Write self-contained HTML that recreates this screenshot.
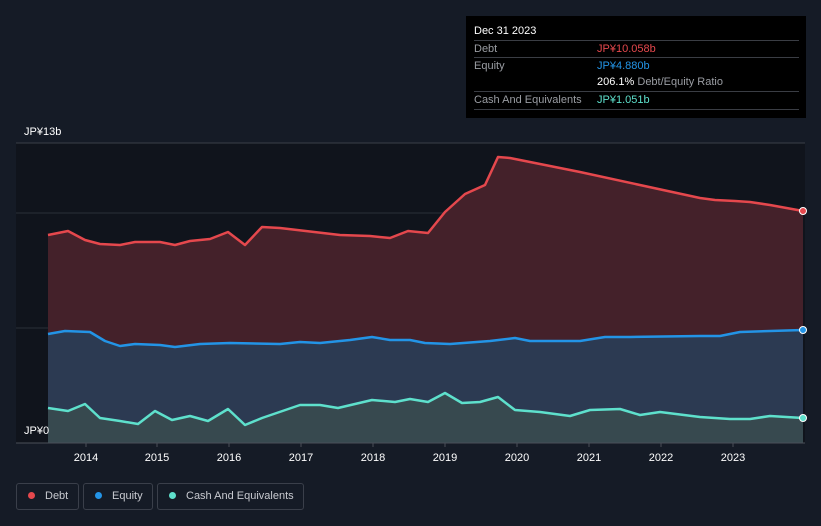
<!DOCTYPE html>
<html><head><meta charset="utf-8"><style>
html,body{margin:0;width:821px;height:526px;overflow:hidden}
body{background:#151b26;font-family:"Liberation Sans",sans-serif;position:relative}
.t{position:absolute;font-size:11px;color:#fff}
.tip{position:absolute;left:466px;top:16px;width:340px;height:102px;background:#000;font-size:11px}
.row{position:absolute;left:8px;width:325px;border-top:1px solid #3a3d44;height:17px;line-height:17px;color:#9a9da3}
.leg{position:absolute;top:483px;height:27px;border:1px solid #3a3f4a;border-radius:3px;color:#c8cad0;font-size:11px;line-height:25px;box-sizing:border-box;white-space:nowrap}
.leg i{display:inline-block;width:7px;height:7px;border-radius:50%;margin:0 10px 0 11px;vertical-align:0}
</style></head><body>
<svg width="821" height="526" style="position:absolute;left:0;top:0">
<rect x="16" y="143" width="789" height="300" fill="#10141c"/>
<line x1="16" y1="143" x2="805" y2="143" stroke="#3a3f48"/>
<line x1="16" y1="213" x2="805" y2="213" stroke="#2a2f38"/>
<line x1="16" y1="328" x2="805" y2="328" stroke="#2a2f38"/>
<polygon fill="#44212a" points="48,443 48,235 68,231 85,240 100,244 120,245 135,242 160,242 175,245 190,241 210,239 228,232 245,245 262,227 280,228 340,235 370,236 390,238 408,231 428,233 445,212 465,194 485,185 498,157 510,158 580,172 700,198 715,200 735,201 750,202 770,205 803,211 803,443"/>
<polygon fill="#2c3a52" points="48,443 48,334 65,331 90,332 105,341 120,346 135,344 160,345 175,347 200,344 230,343 280,344 300,342 320,343 350,340 372,337 390,340 410,340 425,343 450,344 490,341 515,338 530,341 580,341 605,337 630,337 700,336 720,336 740,332 803,330 803,443"/>
<polygon fill="#37494f" points="48,443 48,408 68,411 85,404 100,418 120,421 138,424 155,411 172,420 190,416 208,421 228,409 245,425 262,418 300,405 320,405 338,408 372,400 395,402 410,399 428,402 445,393 462,403 480,402 498,397 515,410 540,412 570,416 590,410 620,409 640,415 660,412 700,417 730,419 750,419 770,416 803,418 803,443"/>
<polyline fill="none" stroke="#e5484d" stroke-width="2.5" stroke-linejoin="round" points="48,235 68,231 85,240 100,244 120,245 135,242 160,242 175,245 190,241 210,239 228,232 245,245 262,227 280,228 340,235 370,236 390,238 408,231 428,233 445,212 465,194 485,185 498,157 510,158 580,172 700,198 715,200 735,201 750,202 770,205 803,211"/>
<polyline fill="none" stroke="#2394e6" stroke-width="2.5" stroke-linejoin="round" points="48,334 65,331 90,332 105,341 120,346 135,344 160,345 175,347 200,344 230,343 280,344 300,342 320,343 350,340 372,337 390,340 410,340 425,343 450,344 490,341 515,338 530,341 580,341 605,337 630,337 700,336 720,336 740,332 803,330"/>
<polyline fill="none" stroke="#5ee0cc" stroke-width="2.5" stroke-linejoin="round" points="48,408 68,411 85,404 100,418 120,421 138,424 155,411 172,420 190,416 208,421 228,409 245,425 262,418 300,405 320,405 338,408 372,400 395,402 410,399 428,402 445,393 462,403 480,402 498,397 515,410 540,412 570,416 590,410 620,409 640,415 660,412 700,417 730,419 750,419 770,416 803,418"/>
<circle cx="803" cy="211" r="3.5" fill="#e5484d" stroke="#fff" stroke-width="1"/>
<circle cx="803" cy="330" r="3.5" fill="#2394e6" stroke="#fff" stroke-width="1"/>
<circle cx="803" cy="418" r="3.5" fill="#5ee0cc" stroke="#fff" stroke-width="1"/>
<line x1="16" y1="443" x2="805" y2="443" stroke="#4a4f58"/>
<g stroke="#4a4f58"><line x1="86" y1="443" x2="86" y2="447"/><line x1="157" y1="443" x2="157" y2="447"/><line x1="229" y1="443" x2="229" y2="447"/><line x1="301" y1="443" x2="301" y2="447"/><line x1="373" y1="443" x2="373" y2="447"/><line x1="445" y1="443" x2="445" y2="447"/><line x1="517" y1="443" x2="517" y2="447"/><line x1="589" y1="443" x2="589" y2="447"/><line x1="661" y1="443" x2="661" y2="447"/><line x1="733" y1="443" x2="733" y2="447"/></g>
<g fill="#fff" font-size="11" text-anchor="middle" font-family="Liberation Sans"><text x="86" y="461">2014</text><text x="157" y="461">2015</text><text x="229" y="461">2016</text><text x="301" y="461">2017</text><text x="373" y="461">2018</text><text x="445" y="461">2019</text><text x="517" y="461">2020</text><text x="589" y="461">2021</text><text x="661" y="461">2022</text><text x="733" y="461">2023</text></g>
</svg>
<div class="t" style="left:24px;top:126px">JP¥13b</div>
<div class="t" style="left:24px;top:425px">JP¥0</div>
<div class="tip">
<div style="position:absolute;left:8px;top:9px;color:#fff">Dec 31 2023</div>
<div class="row" style="top:24px">Debt<span style="position:absolute;left:123px;color:#e5484d">JP¥10.058b</span></div>
<div class="row" style="top:41px">Equity<span style="position:absolute;left:123px;color:#2394e6">JP¥4.880b</span></div>
<div class="row" style="top:58px;border-top:none"><span style="position:absolute;left:123px;color:#fff">206.1% <span style="color:#9a9da3">Debt/Equity Ratio</span></span></div>
<div class="row" style="top:75px;border-bottom:1px solid #3a3d44">Cash And Equivalents<span style="position:absolute;left:123px;color:#5ee0cc">JP¥1.051b</span></div>
</div>
<div class="leg" style="left:16px;width:63px"><i style="background:#e5484d"></i>Debt</div>
<div class="leg" style="left:83px;width:70px"><i style="background:#2394e6"></i>Equity</div>
<div class="leg" style="left:157px;width:147px"><i style="background:#5ee0cc"></i>Cash And Equivalents</div>
</body></html>
